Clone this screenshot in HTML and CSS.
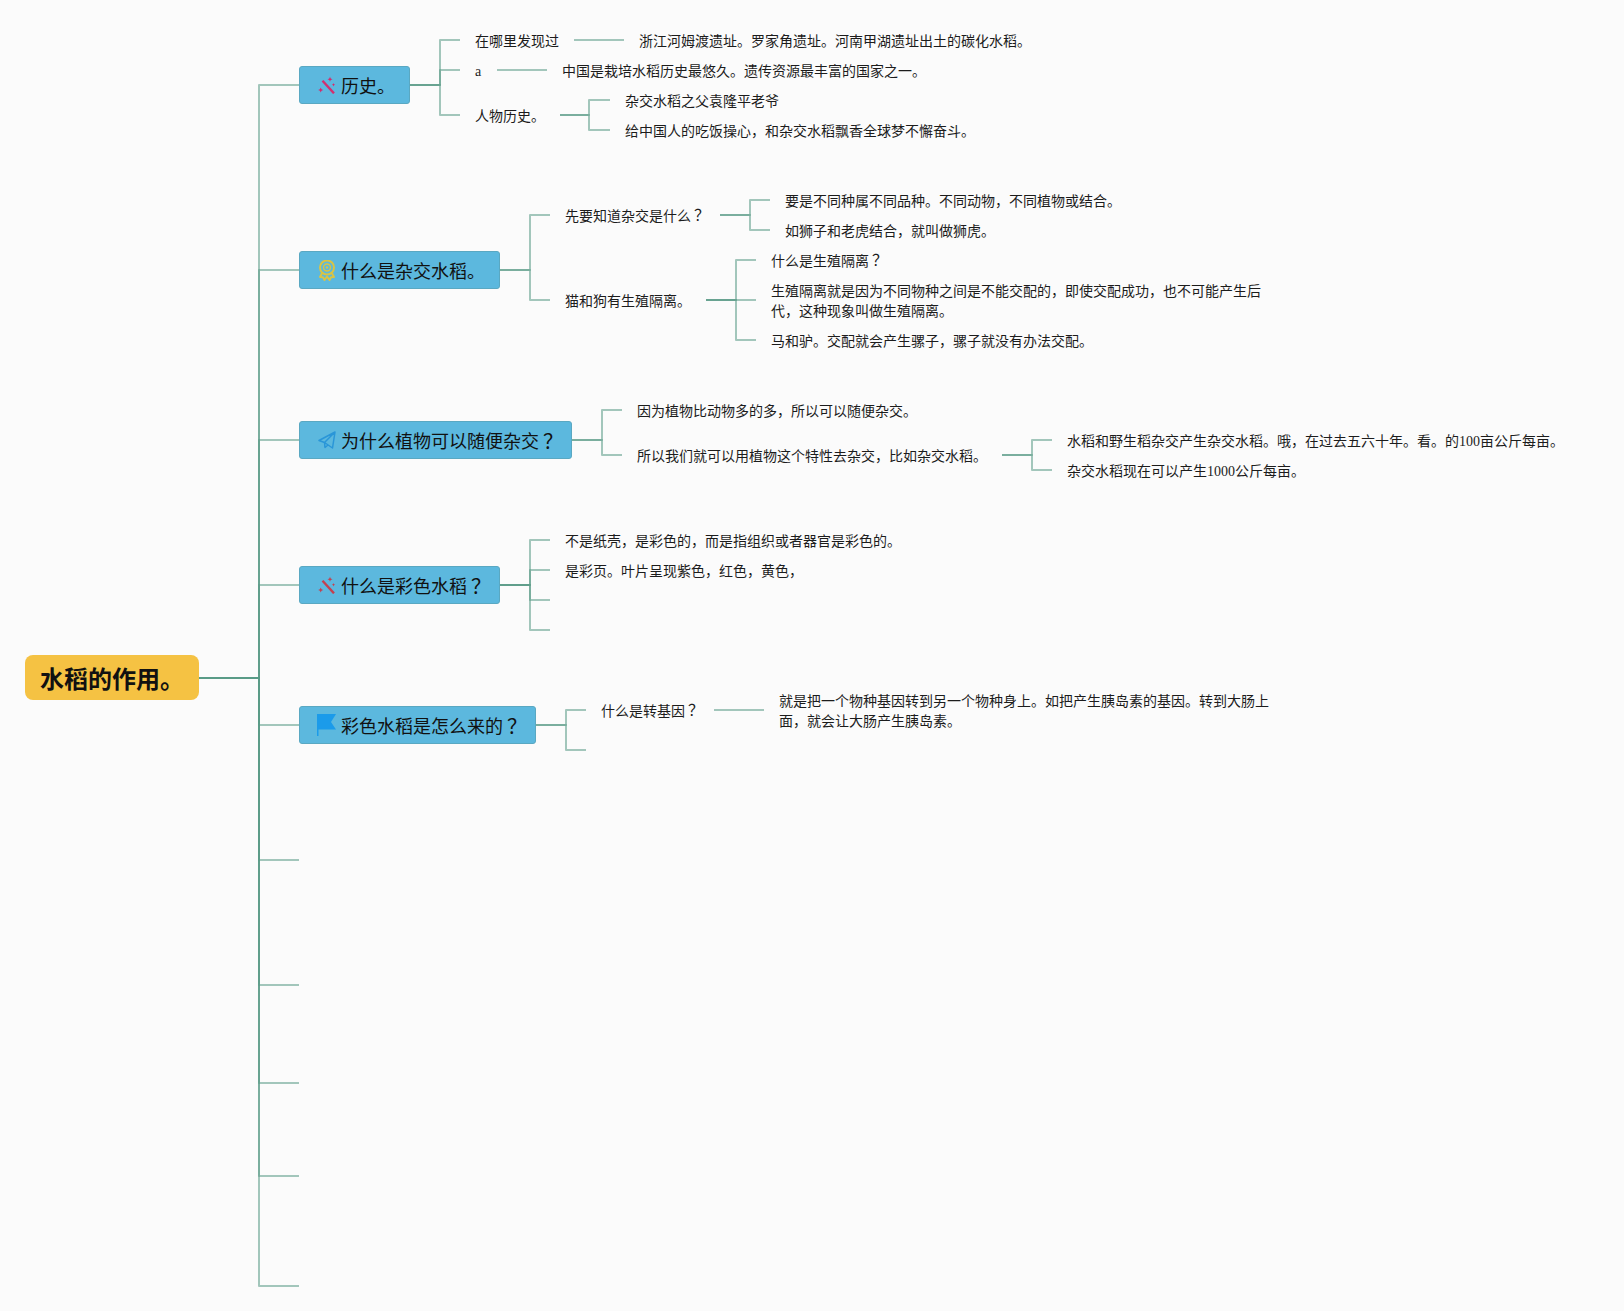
FILE: index.html
```html
<!DOCTYPE html>
<html lang="zh-CN">
<head>
<meta charset="utf-8">
<title>水稻的作用。</title>
<link rel="stylesheet" href="styles.css">
</head>
<body>
<main class="canvas">
  <svg class="links" width="1624" height="1311" viewBox="0 0 1624 1311" aria-hidden="true">
    <path d="M199 678H259V85H299"/>
    <path d="M199 678H259V270H299"/>
    <path d="M199 678H259V440H299"/>
    <path d="M199 678H259V585H299"/>
    <path d="M199 678H259V725H299"/>
    <path d="M199 678H259V860H299"/>
    <path d="M199 678H259V985H299"/>
    <path d="M199 678H259V1083H299"/>
    <path d="M199 678H259V1176H299"/>
    <path d="M199 678H259V1286H299"/>

    <path d="M410 85H440V40H460"/>
    <path d="M410 85H440V70H460"/>
    <path d="M410 85H440V115H460"/>
    <path d="M574 40H624"/>
    <path d="M497 70H547"/>
    <path d="M560 115H589V100H610"/>
    <path d="M560 115H589V130H610"/>

    <path d="M500 270H530V215H550"/>
    <path d="M500 270H530V300H550"/>
    <path d="M720 215H750V200H770"/>
    <path d="M720 215H750V230H770"/>
    <path d="M706 300H736V260H756"/>
    <path d="M706 300H736V300H756"/>
    <path d="M706 300H736V340H756"/>

    <path d="M572 440H602V410H622"/>
    <path d="M572 440H602V455H622"/>
    <path d="M1002 455H1032V440H1052"/>
    <path d="M1002 455H1032V470H1052"/>

    <path d="M500 585H530V540H550"/>
    <path d="M500 585H530V570H550"/>
    <path d="M500 585H530V600H550"/>
    <path d="M500 585H530V630H550"/>

    <path d="M536 725H566V710H586"/>
    <path d="M536 725H566V750H586"/>
    <path d="M714 710H764"/>
  </svg>

  <div class="node root">水稻的作用。</div>

  <div class="node topic t1">
    <svg class="icon" viewBox="0 0 18 18" aria-hidden="true"><path class="wand-bar" d="M4.500 4.800 16 17.300"/><path class="wand-star" d="M2.700 11.500 3.500 13.200 5.200 14 3.500 14.800 2.700 16.500 1.900 14.800.2 14 1.900 13.200ZM12 .8 12.700 2.600 14.500 3.300 12.700 4 12 5.800 11.300 4 9.500 3.300 11.300 2.600ZM15.500 7 16 8.200 17.200 8.700 16 9.200 15.500 10.400 15 9.200 13.800 8.700 15 8.200Z"/></svg>
    <span>历史。</span>
  </div>
  <div class="node topic t2">
    <svg class="icon icon-medal" viewBox="0 0 18 21" aria-hidden="true"><path class="medal-ribbon" d="M4.500 12.500 2 17 5 17.300 6.500 20 9 16.500 11.500 20 13 17.300 16 17 13.500 12.500"/><circle class="medal-ring" cx="9" cy="7.500" r="7"/><circle class="medal-inner" cx="9" cy="7.500" r="3.500"/><circle class="medal-dot" cx="9" cy="7.500" r="1.200"/></svg>
    <span>什么是杂交水稻。</span>
  </div>
  <div class="node topic t3">
    <svg class="icon" viewBox="0 0 18 18" aria-hidden="true"><path class="plane" d="M17 1 1 9.500 6.500 11.500 14.500 17ZM17 1 6.500 11.500 7 16.500 10 14"/></svg>
    <span>为什么植物可以随便杂交<span class="q">？</span></span>
  </div>
  <div class="node topic t4">
    <svg class="icon" viewBox="0 0 18 18" aria-hidden="true"><path class="wand-bar wand-dark-bar" d="M4.500 4.800 16 17.300"/><path class="wand-star wand-dark" d="M2.700 11.500 3.500 13.200 5.200 14 3.500 14.800 2.700 16.500 1.900 14.800.2 14 1.900 13.200ZM12 .8 12.700 2.600 14.500 3.300 12.700 4 12 5.800 11.300 4 9.500 3.300 11.300 2.600ZM15.500 7 16 8.200 17.200 8.700 16 9.200 15.500 10.400 15 9.200 13.800 8.700 15 8.200Z"/></svg>
    <span>什么是彩色水稻<span class="q">？</span></span>
  </div>
  <div class="node topic t5">
    <svg class="icon icon-flag" viewBox="0 0 19 22" aria-hidden="true"><path class="flag" d="M0 0H19L14 8 19 15.500H1.500V22H0Z"/></svg>
    <span>彩色水稻是怎么来的<span class="q">？</span></span>
  </div>

  <div class="node label a1">在哪里发现过</div>
  <div class="node label a2">浙江河姆渡遗址。罗家角遗址。河南甲湖遗址出土的碳化水稻。</div>
  <div class="node label a3">a</div>
  <div class="node label a4">中国是栽培水稻历史最悠久。遗传资源最丰富的国家之一。</div>
  <div class="node label a5">人物历史。</div>
  <div class="node label a6">杂交水稻之父袁隆平老爷</div>
  <div class="node label a7">给中国人的吃饭操心，和杂交水稻飘香全球梦不懈奋斗。</div>

  <div class="node label b1">先要知道杂交是什么<span class="q">？</span></div>
  <div class="node label b2">要是不同种属不同品种。不同动物，不同植物或结合。</div>
  <div class="node label b3">如狮子和老虎结合，就叫做狮虎。</div>
  <div class="node label b4">猫和狗有生殖隔离。</div>
  <div class="node label b5">什么是生殖隔离<span class="q">？</span></div>
  <div class="node label wrap b6">生殖隔离就是因为不同物种之间是不能交配的，即使交配成功，也不可能产生后代，这种现象叫做生殖隔离。</div>
  <div class="node label b7">马和驴。交配就会产生骡子，骡子就没有办法交配。</div>

  <div class="node label c1">因为植物比动物多的多，所以可以随便杂交。</div>
  <div class="node label c2">所以我们就可以用植物这个特性去杂交，比如杂交水稻。</div>
  <div class="node label c3">水稻和野生稻杂交产生杂交水稻。哦，在过去五六十年。看。的100亩公斤每亩。</div>
  <div class="node label c4">杂交水稻现在可以产生1000公斤每亩。</div>

  <div class="node label d1">不是纸壳，是彩色的，而是指组织或者器官是彩色的。</div>
  <div class="node label d2">是彩页。叶片呈现紫色，红色，黄色，</div>

  <div class="node label e1">什么是转基因<span class="q">？</span></div>
  <div class="node label wrap e2">就是把一个物种基因转到另一个物种身上。如把产生胰岛素的基因。转到大肠上面，就会让大肠产生胰岛素。</div>
</main>
</body>
</html>
```

FILE: styles.css
```css
* { box-sizing: border-box; }

html, body {
  margin: 0;
  background: #fbfbfb;
}

.canvas {
  position: relative;
  width: 1624px;
  height: 1311px;
  overflow: hidden;
  font-family: "Liberation Serif", "Noto Sans CJK SC", serif;
  color: #1c1c1c;
}

.links {
  position: absolute;
  left: 0;
  top: 0;
}

.links path {
  fill: none;
  stroke: #5a9a87;
  stroke-opacity: 0.55;
  stroke-width: 2;
  stroke-linejoin: round;
}

.node { position: absolute; }

/* The reference font centres the full-width question mark in its cell. */
.q {
  display: inline-block;
  transform: translateX(0.28em) scale(1.12);
}

.root {
  left: 25px;
  top: 655px;
  width: 174px;
  height: 45px;
  padding: 0 15px;
  background: #f5c243;
  border-radius: 8px;
  font-size: 24px;
  font-weight: 700;
  line-height: 51px;
  color: #111;
  white-space: nowrap;
}

.topic {
  left: 299px;
  display: flex;
  align-items: center;
  gap: 5px;
  height: 38px;
  padding: 0 14px 0 18px;
  background: #5cb8de;
  border: 1px solid #5aa8c2;
  border-radius: 3px;
  font-size: 18px;
  line-height: 20px;
  color: #111;
  white-space: nowrap;
}

.topic > span { position: relative; top: 1.5px; }

.t1 { top: 66px; }
.t2 { top: 251px; }
.t3 { top: 421px; }
.t4 { top: 566px; }
.t5 { top: 706px; }

.icon {
  flex: none;
  width: 18px;
  height: 18px;
}

.icon-medal { height: 21px; }
.icon-flag { width: 19px; height: 22px; margin-left: -1px; }

.wand-bar { fill: none; stroke: #d2306f; stroke-width: 2.4; }
.wand-dark-bar { stroke: #c4404f; }
.wand-star { fill: #d8286a; }
.wand-dark { fill: #c4404f; }

.medal-ring { fill: none; stroke: #d9c445; stroke-width: 2; }
.medal-inner { fill: none; stroke: #d9c445; stroke-width: 1.4; }
.medal-dot { fill: #d9c445; }
.medal-ribbon { fill: none; stroke: #d9c445; stroke-width: 2; stroke-linejoin: round; }

.plane { fill: none; stroke: #2a96d8; stroke-width: 1.5; stroke-linejoin: round; }
.flag { fill: #1b9bea; }

.label {
  font-size: 14px;
  line-height: 20px;
  white-space: nowrap;
}

.wrap {
  width: 491px;
  white-space: normal;
}

.a1 { left: 475px; top: 32px; }
.a2 { left: 639px; top: 32px; }
.a3 { left: 475px; top: 62px; }
.a4 { left: 562px; top: 62px; }
.a5 { left: 475px; top: 107px; }
.a6 { left: 625px; top: 92px; }
.a7 { left: 625px; top: 122px; }

.b1 { left: 565px; top: 207px; }
.b2 { left: 785px; top: 192px; }
.b3 { left: 785px; top: 222px; }
.b4 { left: 565px; top: 292px; }
.b5 { left: 771px; top: 252px; }
.b6 { left: 771px; top: 282px; }
.b7 { left: 771px; top: 332px; }

.c1 { left: 637px; top: 402px; }
.c2 { left: 637px; top: 447px; }
.c3 { left: 1067px; top: 432px; }
.c4 { left: 1067px; top: 462px; }

.d1 { left: 565px; top: 532px; }
.d2 { left: 565px; top: 562px; }

.e1 { left: 601px; top: 702px; }
.e2 { left: 779px; top: 692px; }
```
